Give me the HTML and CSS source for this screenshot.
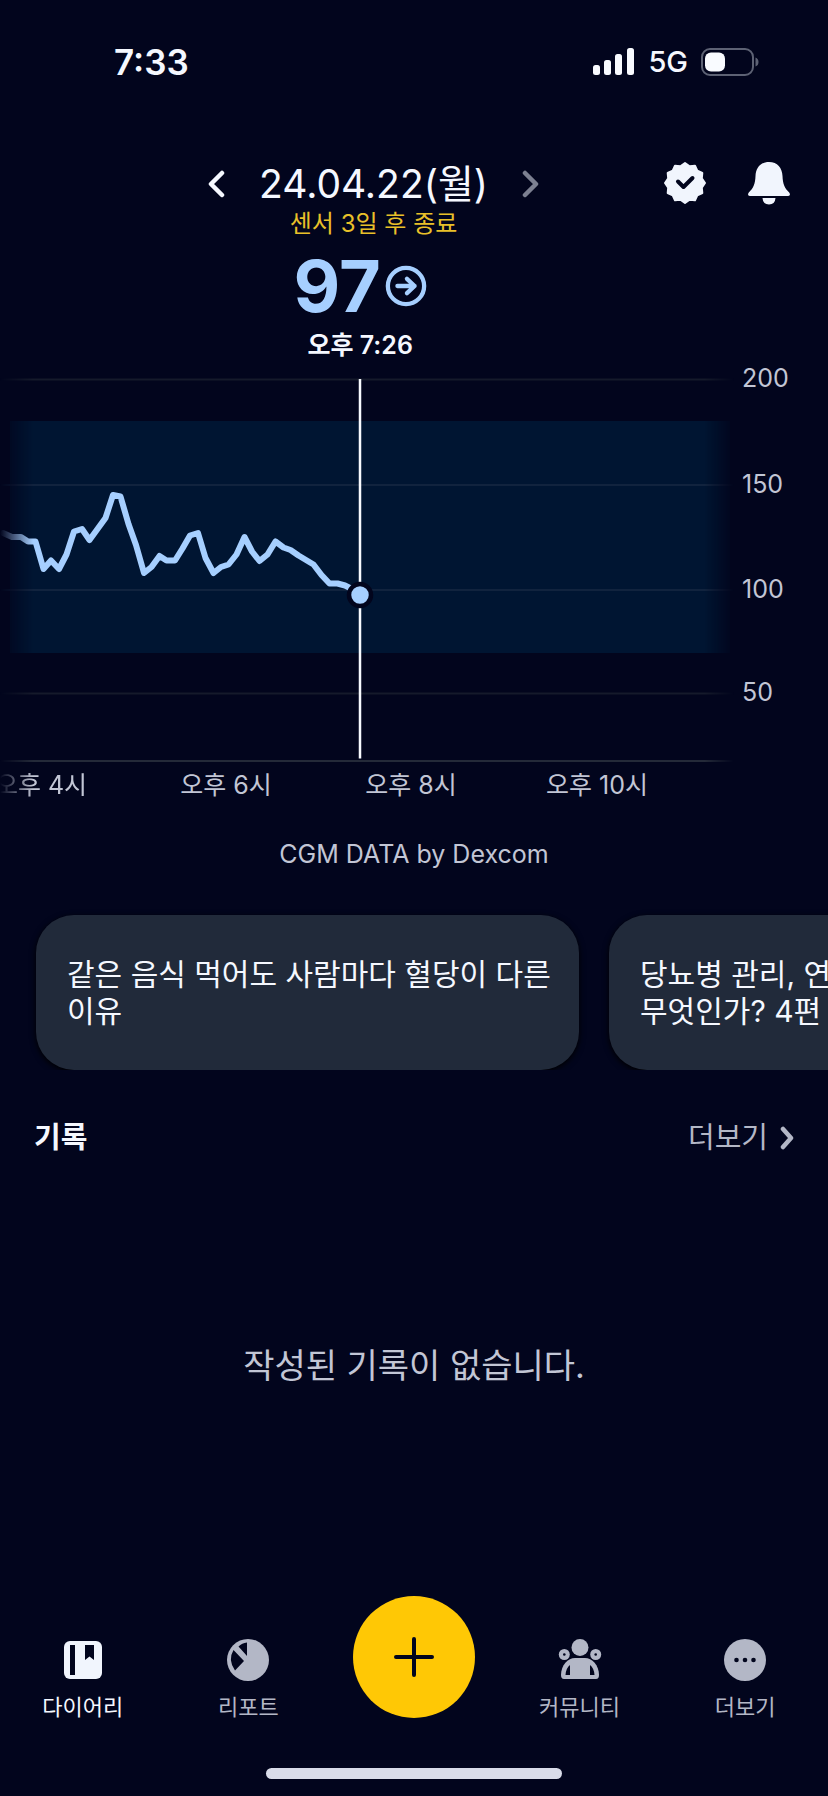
FILE: index.html
```html
<!DOCTYPE html>
<html lang="ko">
<head>
<meta charset="utf-8">
<meta name="viewport" content="width=device-width, initial-scale=1">
<title>다이어리</title>
<link rel="stylesheet" href="styles.css">
</head>
<body>
<div class="app">
  <div class="status">
    <span class="status-time">7:33</span>
    <div class="status-right">
      <svg class="signal" viewBox="0 0 42 28" aria-hidden="true">
        <rect x="0" y="17" width="7" height="10" rx="2.5"/>
        <rect x="11" y="12" width="7" height="15" rx="2.5"/>
        <rect x="22" y="6" width="7" height="21" rx="2.5"/>
        <rect x="34" y="0" width="7" height="27" rx="2.5"/>
      </svg>
      <span class="status-net">5G</span>
      <svg class="battery" viewBox="0 0 58 28" aria-hidden="true">
        <rect x="1" y="1" width="51" height="26" rx="8" fill="none" stroke="#5d6274" stroke-width="2"/>
        <path d="M54.500 9.500q3 1 3 4.500t-3 4.500z" fill="#5d6274"/>
        <rect x="4" y="4.500" width="20" height="19" rx="6" fill="#f9fbff"/>
      </svg>
    </div>
  </div>

  <header class="header">
    <div class="date-nav">
      <button class="icon-button" aria-label="이전 날짜"><svg class="chevron" viewBox="0 0 18 28"><path d="M15 3 4 14l11 11" fill="none" stroke="#f5f8ff" stroke-width="4.500" stroke-linecap="round" stroke-linejoin="round"/></svg></button>
      <h1 class="date">24.04.22(월)</h1>
      <button class="icon-button" aria-label="다음 날짜"><svg class="chevron" viewBox="0 0 18 28"><path d="M3 3l11 11L3 25" fill="none" stroke="#7c8091" stroke-width="4.500" stroke-linecap="round" stroke-linejoin="round"/></svg></button>
      <p class="sensor">센서 3일 후 종료</p>
    </div>
    <div class="actions">
      <button class="icon-button" aria-label="인증"><svg class="action-icon" viewBox="-21 -21 42 42"><path d="M0-20 4.600-16.800 10-17.300 12.300-12.300 17.300-10 16.800-4.600 20 0 16.800 4.600 17.300 10 12.300 12.300 10 17.300 4.600 16.800 0 20-4.600 16.800-10 17.300-12.300 12.300-17.300 10-16.800 4.600-20 0-16.800-4.600-17.300-10-12.300-12.300-10-17.300-4.600-16.800z" fill="#f1f5fd" stroke="#f1f5fd" stroke-width="2" stroke-linejoin="round"/><path d="M-7-1.500-1.500 4 7.500-5" fill="none" stroke="#02051d" stroke-width="4" stroke-linecap="round" stroke-linejoin="round"/></svg></button>
      <button class="icon-button" aria-label="알림"><svg class="action-icon" viewBox="0 0 42 42"><path d="M21 0C12.500 0 7.800 6 7.500 14 7.200 22 5.500 26 .800 30.500-.500 32 0 34 1.800 34h38.400c1.800 0 2.300-2 1-3.500C36.500 26 34.800 22 34.500 14 34.200 6 29.500 0 21 0zM14.500 36h13q-.5 6.500-6.500 6.500T14.500 36z" fill="#f1f5fd"/></svg></button>
    </div>
  </header>

  <main>
    <section class="reading">
      <div class="reading-value">
        <strong class="value">97</strong>
        <svg class="trend" viewBox="0 0 44 44" role="img" aria-label="유지"><g fill="none" stroke="#a6cfff" stroke-width="4.500" stroke-linecap="round" stroke-linejoin="round"><circle cx="22" cy="22" r="19"/><path d="M13 22h18M23 14.500 31 22l-8 7.500"/></g></svg>
      </div>
      <p class="reading-time">오후 7:26</p>
    </section>

    <svg class="chart" viewBox="0 0 828 454" role="img" aria-label="혈당 그래프">
      <defs>
        <linearGradient id="fade" gradientUnits="userSpaceOnUse" x1="0" y1="0" x2="734" y2="0">
          <stop offset="0" stop-color="#fff" stop-opacity="0"/>
          <stop offset=".045" stop-color="#fff"/>
          <stop offset=".96" stop-color="#fff"/>
          <stop offset="1" stop-color="#fff" stop-opacity="0"/>
        </linearGradient>
        <mask id="edges" maskUnits="userSpaceOnUse" x="0" y="0" width="734" height="454"><rect width="734" height="454" fill="url(#fade)"/></mask>
      </defs>
      <g mask="url(#edges)">
        <rect x="10" y="61" width="720" height="232" fill="#001532"/>
        <path d="M0 19.500h734M0 333.500h734" stroke="#151a2b" stroke-width="2"/>
        <path d="M0 125h734M0 230h734" stroke="#11233e" stroke-width="2"/>
        <path d="M0 401h734" stroke="#242a39" stroke-width="2"/>
        <polyline class="glucose" points="3,173 12,177 21,177 28,181.500 35.500,181.500 43.500,209 51,200.500 59,209 66.500,194.500 74,171.500 82,169 89.500,180 97.500,169 105.500,158 113,135 120.500,136.500 128.500,164 136,185 144,213 151.500,207 159.500,196 166.500,200.500 175,200.500 182.500,188.500 190,175.500 198,173 205.500,198 213.500,213 221,207 228.500,204.500 236.500,194.500 244.500,177 252,191.500 259.500,201 267.500,194.500 275.500,181.500 283.500,187.500 290.500,190 298.500,195.500 313.500,204.500 321.500,215 329.500,223.500 337.500,223.500 345,225.500 360,233"/>
        <text class="tick" x="41" y="434" text-anchor="middle">오후 4시</text>
      </g>
      <path d="M360 19v379.500" stroke="#f8faff" stroke-width="2.500"/>
      <circle cx="360" cy="235" r="11" fill="#a6cfff" stroke="#02051d" stroke-width="4.500"/>
      <g class="tick">
        <text x="742" y="27">200</text>
        <text x="742" y="133">150</text>
        <text x="742" y="238">100</text>
        <text x="742" y="341">50</text>
      </g>
      <g class="tick" text-anchor="middle">
        <text x="226" y="434">오후 6시</text>
        <text x="411" y="434">오후 8시</text>
        <text x="597" y="434">오후 10시</text>
      </g>
    </svg>
    <p class="source">CGM DATA by Dexcom</p>

    <div class="cards">
      <a class="card" href="#article-1">같은 음식 먹어도 사람마다 혈당이 다른 이유</a>
      <a class="card" href="#article-2">당뇨병 관리, 연속혈당측정기란<br>무엇인가? 4편</a>
    </div>

    <section class="records">
      <div class="records-head">
        <h2 class="records-title">기록</h2>
        <a class="more" href="#records">더보기
          <svg class="more-icon" viewBox="0 0 14 24" aria-hidden="true"><path d="M3 3l8 9-8 9" fill="none" stroke="#b3b7c6" stroke-width="4.500" stroke-linecap="round" stroke-linejoin="round"/></svg>
        </a>
      </div>
      <p class="empty">작성된 기록이 없습니다.</p>
    </section>
  </main>

  <nav class="tabs">
    <a class="tab tab-active" href="#diary">
      <svg class="tab-icon" viewBox="0 0 44 44" aria-hidden="true"><rect x="3" y="3" width="38" height="38" rx="6" fill="#f1f5fd"/><path d="M9 7h5v30H9zM24 7h9v15l-4.500-3.500L24 22z" fill="#02051d"/></svg>
      다이어리
    </a>
    <a class="tab" href="#report">
      <svg class="tab-icon" viewBox="0 0 44 44" aria-hidden="true"><circle cx="22" cy="22" r="21" fill="#b3b7c6"/><path d="M21 4.500V18L12.500 8.500Q16 5 21 4.500zM7.500 12 18 23 9 32.500Q1.500 22 7.500 12z" fill="#02051d"/></svg>
      리포트
    </a>
    <button class="add" aria-label="기록 추가"><svg class="add-icon" viewBox="0 0 40 40"><path d="M20 2v36M2 20h36" stroke="#02051d" stroke-width="4" stroke-linecap="round"/></svg></button>
    <a class="tab" href="#community">
      <svg class="tab-icon" viewBox="0 0 44 44" aria-hidden="true"><g fill="#b3b7c6"><circle cx="22" cy="9.500" r="8.500"/><circle cx="6.300" cy="16.500" r="5.500"/><circle cx="37.700" cy="16.500" r="5.500"/><path d="M3 37C3 27 10 20 17 20h10c7 0 14 7 14 17q0 4-3 4H6q-3 0-3-4z"/></g><g fill="#02051d"><circle cx="6.300" cy="16.500" r="1.300"/><circle cx="37.700" cy="16.500" r="1.300"/><path d="M12 27v10H7.500Q8 30 12 27zM32 27v10h4.500Q36 30 32 27z"/></g></svg>
      커뮤니티
    </a>
    <a class="tab" href="#more">
      <svg class="tab-icon" viewBox="0 0 44 44" aria-hidden="true"><circle cx="22" cy="22" r="21" fill="#b3b7c6"/><g fill="#02051d"><circle cx="13.500" cy="22" r="2.300"/><circle cx="22" cy="22" r="2.300"/><circle cx="30.500" cy="22" r="2.300"/></g></svg>
      더보기
    </a>
  </nav>
  <div class="home-bar"></div>
</div>
</body>
</html>
```
FILE: styles.css
```css
* {
  box-sizing: border-box;
}

body {
  margin: 0;
  background: #02051d;
  color: #f5f8ff;
  font-family: Inter, "Noto Sans CJK KR", sans-serif;
  overflow-x: hidden;
}

h1, h2, p {
  margin: 0;
}

a {
  color: inherit;
  text-decoration: none;
}

svg {
  display: block;
}

.app {
  display: flex;
  flex-direction: column;
  min-height: 100vh;
}

.status {
  display: flex;
  justify-content: space-between;
  align-items: center;
  padding: 42px 69px 0 114px;
  line-height: 40px;
}

.status-time {
  font-size: 35px;
  font-weight: 600;
}

.status-right {
  display: flex;
  align-items: center;
  gap: 13px;
}

.signal {
  width: 42px;
  height: 28px;
  fill: #f9fbff;
}

.status-net {
  font-size: 29px;
  font-weight: 500;
}

.battery {
  width: 58px;
  height: 28px;
}

.header {
  display: flex;
  justify-content: flex-end;
  align-items: flex-start;
  gap: 124px;
  padding: 76px 38px 0 0;
}

.date-nav {
  display: grid;
  grid-template-columns: auto auto auto;
  align-items: center;
  column-gap: 34px;
}

.icon-button {
  padding: 0;
  border: 0;
  background: none;
}

.chevron {
  width: 18px;
  height: 28px;
}

.date {
  font-size: 39px;
  font-weight: 400;
  line-height: 51px;
}

.sensor {
  grid-column: 1 / -1;
  color: #e9c029;
  font-size: 24px;
  line-height: 30px;
  text-align: center;
}

.actions {
  display: flex;
  gap: 42px;
  padding-top: 4px;
}

.action-icon {
  width: 42px;
  height: 42px;
  overflow: visible;
}

.reading {
  width: 87%;
  padding-top: 11px;
}

.reading-value {
  display: flex;
  justify-content: center;
  align-items: center;
  gap: 4px;
}

.value {
  color: #a6cfff;
  font-size: 72px;
  font-weight: 700;
  line-height: 72px;
}

.trend {
  width: 42px;
  height: 42px;
}

.reading-time {
  padding-top: 8px;
  font-size: 25px;
  font-weight: 600;
  line-height: 30px;
  text-align: center;
}

.chart {
  width: 100%;
  height: auto;
}

.glucose {
  fill: none;
  stroke: #a6cfff;
  stroke-width: 6;
  stroke-linecap: round;
  stroke-linejoin: round;
}

.tick {
  fill: #c2c6d5;
  font-size: 25px;
}

.source {
  padding-top: 24px;
  color: #c2c6d5;
  font-size: 25px;
  line-height: 32px;
  text-align: center;
}

.cards {
  display: flex;
  gap: 30px;
  padding: 45px 0 0 36px;
  overflow: hidden;
}

.card {
  flex: none;
  width: 543px;
  max-width: 80vw;
  min-height: 155px;
  padding: 41px 24px 40px 31px;
  border-radius: 38px;
  background: #212a3a;
  box-shadow: 0 2px 6px #000;
  font-size: 30px;
  line-height: 37px;
  word-break: keep-all;
}

.records {
  padding: 46px 34px 0;
}

.records-head {
  display: flex;
  justify-content: space-between;
  align-items: center;
  line-height: 44px;
}

.records-title {
  font-size: 29px;
  font-weight: 700;
}

.more {
  display: flex;
  align-items: center;
  gap: 12px;
  color: #b3b7c6;
  font-size: 29px;
}

.more-icon {
  width: 14px;
  height: 24px;
}

.empty {
  padding-top: 182px;
  color: #c2c6d5;
  font-size: 34px;
  line-height: 48px;
  text-align: center;
}

.tabs {
  display: grid;
  grid-template-columns: repeat(5, 1fr);
  justify-items: center;
  align-items: start;
  margin-top: auto;
}

.tab {
  display: flex;
  flex-direction: column;
  align-items: center;
  gap: 9px;
  padding-top: 42px;
  color: #b3b7c6;
  font-size: 22px;
  line-height: 32px;
}

.tab-active {
  color: #f5f8ff;
}

.tab-icon {
  width: 44px;
  height: 44px;
}

.add {
  display: grid;
  place-items: center;
  width: 122px;
  height: 122px;
  padding: 0;
  border: 0;
  border-radius: 50%;
  background: #ffc805;
}

.add-icon {
  width: 40px;
  height: 40px;
}

.home-bar {
  align-self: center;
  width: 296px;
  height: 11px;
  margin: 45px 0 17px;
  border-radius: 6px;
  background: #d9dce9;
}
```
